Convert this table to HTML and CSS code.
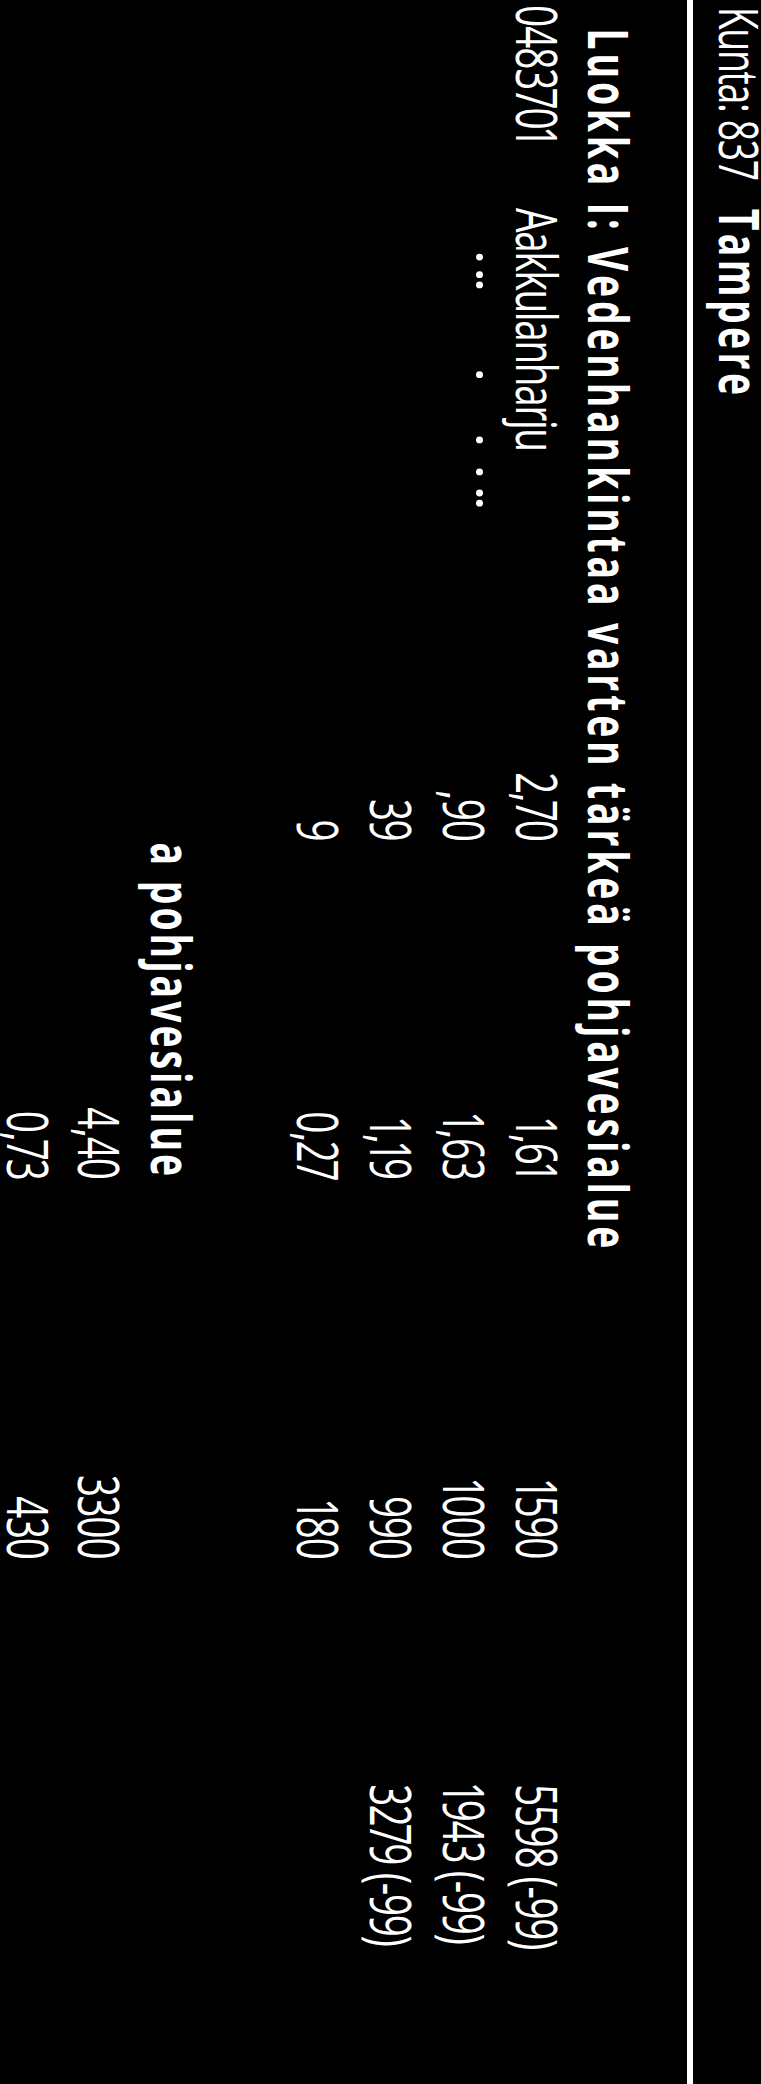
FILE: index.html
```html
<!DOCTYPE html>
<html lang="fi">
<head>
<meta charset="utf-8">
<title>Kunta: 837 Tampere</title>
<link rel="stylesheet" href="styles.css">
</head>
<body>
<div class="viewport">
  <div class="page">
    <header class="municipality"><span class="label">Kunta: 837</span> <strong class="town">Tampere</strong></header>
    <h1 class="class-title">Luokka I: Vedenhankintaa varten tärkeä pohjavesialue</h1>
    <div class="table">
      <div class="row">
        <span class="c-id">0483701</span>
        <span class="c-name">Aakkulanharju</span>
        <span class="c3">2,70</span>
        <span class="c4">1,61</span>
        <span class="c5">1590</span>
        <span class="c7">5598 (-99)</span>
      </div>
      <div class="row">
        <span class="c-name ditto"><i></i><i></i><i></i><i></i><i></i><i></i><i></i><i></i></span>
        <span class="c3">,90</span>
        <span class="c4">1,63</span>
        <span class="c5">1000</span>
        <span class="c7">1943 (-99)</span>
      </div>
      <div class="row">
        <span class="c3">39</span>
        <span class="c4">1,19</span>
        <span class="c5">990</span>
        <span class="c7">3279 (-99)</span>
      </div>
      <div class="row">
        <span class="c3">9</span>
        <span class="c4">0,27</span>
        <span class="c5">180</span>
      </div>
      <div class="row row-blank"></div>
      <div class="row row-bold">
        <span class="sub">a pohjavesialue</span>
      </div>
      <div class="row row-short">
        <span class="c4">4,40</span>
        <span class="c5">3300</span>
      </div>
      <div class="row">
        <span class="c4">0,73</span>
        <span class="c5">430</span>
      </div>
    </div>
  </div>
</div>
</body>
</html>
```
FILE: styles.css
```css
html, body {
  margin: 0;
  padding: 0;
  background: #000;
  overflow: hidden;
}

.viewport {
  width: 761px;
  height: 2084px;
  overflow: hidden;
  background: #000;
}

/* The scanned page is turned a quarter turn: lines run top to bottom,
   and follow each other from right to left. The scan is also condensed
   along the reading direction. */
.page {
  writing-mode: vertical-rl;
  width: 761px;
  height: 3065px;
  transform: scaleY(0.68);
  transform-origin: 0 0;
  color: #fff;
  font-family: "Open Sans", "Liberation Sans", sans-serif;
}

.municipality {
  font-size: 55px;
  line-height: 42px;
  block-size: 42px;
  padding-block-end: 26px;
  padding-inline-start: 10px;
  border-block-end: 6px solid #fff;
  letter-spacing: -2px;
  white-space: nowrap;
}

.municipality .town {
  font-weight: 700;
  letter-spacing: 5px;
  margin-inline-start: 30px;
}

.class-title {
  margin: 42px 0 0 0;
  margin-block-start: 42px;
  margin-block-end: 0;
  font-size: 55px;
  font-weight: 700;
  line-height: 71px;
  letter-spacing: 5.6px;
  white-space: nowrap;
}

.table {
  font-size: 57px;
  letter-spacing: -2px;
  font-variant-numeric: proportional-nums;
}

.row {
  display: grid;
  grid-template-columns: 306px 594px 336px 498px 558px 332px 1fr;
  block-size: 73px;
  line-height: 73px;
  white-space: nowrap;
}

.row-short {
  block-size: 71px;
}

.row-bold {
  font-size: 55px;
  font-weight: 700;
  letter-spacing: 4.4px;
}

.c-id {
  grid-column: 1;
  padding-inline-start: 7px;
}

.c-name {
  grid-column: 2;
}

.c3 {
  grid-column: 3;
  justify-self: end;
}

.c4 {
  grid-column: 4;
  justify-self: end;
}

.c5 {
  grid-column: 5;
  justify-self: end;
}

.c7 {
  grid-column: 7;
}

.sub {
  grid-column: 2 / 5;
  justify-self: end;
}

/* faint ditto marks under the name */
.ditto {
  display: flex;
  align-self: start;
  margin-block-start: 18px;
  block-size: 7px;
}

.ditto i {
  flex: none;
  inline-size: 10px;
  block-size: 7px;
  background: #fff;
  border-radius: 50%;
}

.ditto i:nth-child(1) { margin-inline-start: 67px; }
.ditto i:nth-child(2) { margin-inline-start: 16px; }
.ditto i:nth-child(3) { margin-inline-start: 5px; }
.ditto i:nth-child(4) { margin-inline-start: 122px; }
.ditto i:nth-child(5) { margin-inline-start: 86px; }
.ditto i:nth-child(6) { margin-inline-start: 37px; }
.ditto i:nth-child(7) { margin-inline-start: 21px; }
.ditto i:nth-child(8) { margin-inline-start: 5px; }
```
